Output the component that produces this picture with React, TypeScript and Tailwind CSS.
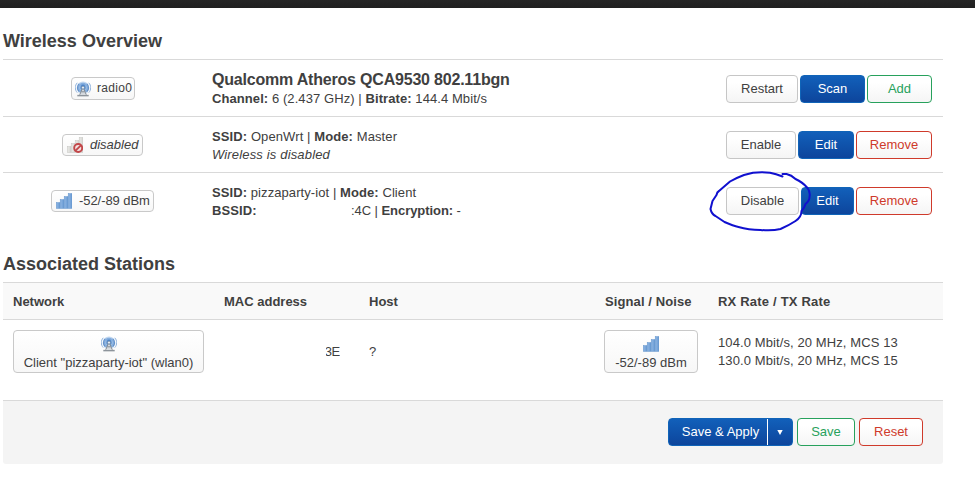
import React from "react";

type Tone = "plain" | "primary" | "positive" | "negative";

const tones: Record<Tone, string> = {
  plain: "border-[#c6c6c6] text-[#404040] bg-linear-to-b from-white from-25% to-[#f5f5f5]",
  primary: "border-[#1064b8] text-white bg-linear-to-b from-[#1260ba] to-[#0d459c]",
  positive: "border-[#27a15c] text-[#27a15c] bg-linear-to-b from-white from-25% to-[#f5f5f5]",
  negative: "border-[#cf3a2b] text-[#cf3a2b] bg-linear-to-b from-white from-25% to-[#f5f5f5]",
};

function Button({ tone = "plain", className, children }: { tone?: Tone; className: string; children: React.ReactNode }) {
  return (
    <button className={`flex h-7 shrink-0 items-center justify-center whitespace-nowrap rounded-[4px] border text-[13px] leading-[18px] ${tones[tone]} ${className}`}>
      {children}
    </button>
  );
}

function RadioIcon() {
  return (
    <svg width="16" height="16" viewBox="0 0 16 16" fill="none" className="shrink-0">
      <circle cx="8" cy="6.800" r="6.400" fill="#c3d8f0" />
      <circle cx="8" cy="6.800" r="5" fill="#85aede" />
      <circle cx="8" cy="6.800" r="3.200" fill="#4f87cb" />
      <path d="M2.200 1.800C-.3 4.500-.3 8.900 2.200 11.600M13.800 1.800c2.500 2.700 2.500 7.100 0 9.800" stroke="#8fb2dc" strokeWidth="1" />
      <path d="M4.200 2.800c-2.100 2.200-2.100 5.800 0 8M11.800 2.800c2.100 2.200 2.100 5.800 0 8" stroke="#447bbe" strokeWidth="1" />
      <path d="M5.800 4.400c-1.200 1.300-1.200 3.500 0 4.800M10.200 4.400c1.200 1.300 1.200 3.500 0 4.800" stroke="#b9d3ef" strokeWidth=".8" />
      <path d="M7 7.500h2l2.500 6h-7z" fill="#d4d9de" />
      <path d="M7.400 7.500 4.700 13.800M8.600 7.500l2.700 6.300M6.400 10.800h3.200" stroke="#717a84" strokeWidth=".8" />
      <circle cx="8" cy="6.600" r="1.500" fill="#e4ecf5" stroke="#5c7692" strokeWidth=".6" />
      <path d="M2.300 14.600h11.400" stroke="#8d949b" strokeWidth="1.500" />
    </svg>
  );
}

function SignalIcon({ off = false }: { off?: boolean }) {
  const bars = [[0, 10, 5.8], [4, 7, 8.8], [8, 4, 11.8], [12, 1, 14.8]];
  return (
    <svg width="16" height="16" viewBox="0 0 16 16" className="shrink-0">
      <defs>
        <linearGradient id="bar-on" x1="0" x2="1"><stop stopColor="#8fb7e5" /><stop offset="1" stopColor="#6a9bd3" /></linearGradient>
        <linearGradient id="bar-off" x1="0" x2="1"><stop stopColor="#ebebe8" /><stop offset="1" stopColor="#d6d6d2" /></linearGradient>
      </defs>
      {bars.map(([x, y, h]) => (
        <rect key={x} x={x + 0.2} y={y - 0.4} width="3.800" height={h} fill={off ? "url(#bar-off)" : "url(#bar-on)"} stroke={off ? "#c3c3bf" : "#6293cb"} strokeWidth=".5" />
      ))}
      {off && (
        <g fill="none" stroke="#c2474a" strokeWidth="1.900">
          <circle cx="11.200" cy="11" r="4" fill="#f3e4e3" />
          <path d="m8.500 13.700 5.400-5.400" />
        </g>
      )}
    </svg>
  );
}

const badge = "flex items-center rounded-[4px] border border-[#c9c9c9] bg-linear-to-b from-white to-[#f7f7f7]";

function Row({ height, children }: { height: string; children: React.ReactNode }) {
  return <div className={`flex w-[940px] border-t border-[#d9d9d9] ${height}`}>{children}</div>;
}

export default function App() {
  return (
    <div className="relative h-[494px] w-[975px] overflow-hidden bg-white font-['Liberation_Sans',Arial,sans-serif] text-[13px] leading-[18px] text-[#404040]">
      <div className="h-2 bg-linear-to-b from-[#262626] to-[#202020]" />
      <main className="pl-[3px]">
        <h3 className="flex h-[51px] items-center pt-[14px] text-[18px] font-bold leading-[36px]">Wireless Overview</h3>

        <Row height="h-[57px]">
          <div className="flex w-[209px] justify-center pt-[17px] pr-[9px]">
            <div className={`${badge} h-[23px] w-[64px] gap-[6px] pl-[3px] text-[12px] tracking-[0.300px]`}><RadioIcon /><span className="pb-px">radio0</span></div>
          </div>
          <div className="w-[514px] pt-[11px]">
            <div className="text-[16px] font-bold tracking-[-0.200px]">Qualcomm Atheros QCA9530 802.11bgn</div>
            <div className="pt-px tracking-[0.080px]"><b>Channel:</b> 6 (2.437 GHz) | <b>Bitrate:</b> 144.4 Mbit/s</div>
          </div>
          <div className="flex gap-[2px] pt-[15px]">
            <Button className="w-[72px]">Restart</Button>
            <Button tone="primary" className="w-[65px]">Scan</Button>
            <Button tone="positive" className="w-[65px]">Add</Button>
          </div>
        </Row>

        <Row height="h-[56px]">
          <div className="flex w-[209px] justify-center pt-[17px] pr-[10px]">
            <div className={`${badge} h-[22px] w-[81px] gap-[7px] pl-[4px]`}><SignalIcon off /><i>disabled</i></div>
          </div>
          <div className="w-[514px] pt-[11px]">
            <div className="tracking-[0.100px]"><b>SSID:</b> OpenWrt | <b>Mode:</b> Master</div>
            <i className="tracking-[0.160px]">Wireless is disabled</i>
          </div>
          <div className="flex gap-[2px] pt-[14px]">
            <Button className="w-[70px]">Enable</Button>
            <Button tone="primary" className="w-[56px]">Edit</Button>
            <Button tone="negative" className="w-[76px]">Remove</Button>
          </div>
        </Row>

        <Row height="h-[72px]">
          <div className="flex w-[209px] justify-center pt-[17px] pr-[10px]">
            <div className={`${badge} h-[22px] w-[103px] gap-[7px] pl-[4px]`}><SignalIcon /><span className="tracking-[-0.060px]">-52/-89 dBm</span></div>
          </div>
          <div className="w-[514px] pt-[11px]">
            <div className="tracking-[0.080px]"><b>SSID:</b> pizzaparty-iot | <b>Mode:</b> Client</div>
            <div className="flex tracking-[-0.060px]"><b className="w-[139px] tracking-[0.100px]">BSSID:</b><span>:4C | <b>Encryption:</b> -</span></div>
          </div>
          <div className="flex gap-[2px] pt-[14px]">
            <Button className="w-[73px]">Disable</Button>
            <Button tone="primary" className="w-[53px]">Edit</Button>
            <Button tone="negative" className="w-[76px]">Remove</Button>
          </div>
        </Row>

        <h3 className="flex h-[38px] items-center pt-[2px] text-[18px] font-bold">Associated Stations</h3>
        <div className="flex h-[37px] w-[940px] items-center border-t border-[#d9d9d9] bg-[#f9f9f9] pt-[2px] pl-[10px] font-bold">
          <div className="w-[211px]">Network</div>
          <div className="w-[145px]">MAC address</div>
          <div className="w-[236px]">Host</div>
          <div className="w-[113px] tracking-[0.100px]">Signal / Noise</div>
          <div className="tracking-[0.200px]">RX Rate / TX Rate</div>
        </div>
        <Row height="h-[81px]">
          <div className="w-[323px] pl-[10px] pt-[10px]">
            <div className={`${badge} h-[43px] w-[191px] flex-col pt-[5px]`}><RadioIcon /><span className="pt-[2px]">Client "pizzaparty-iot" (wlan0)</span></div>
          </div>
          <div className="w-[43px] pt-[23px]">
            <div className="flex w-[14px] justify-end overflow-hidden tracking-[-0.300px]">3E</div>
          </div>
          <div className="w-[235px] pt-[23px]">?</div>
          <div className="w-[114px] pt-[10px]">
            <div className={`${badge} h-[43px] w-[94px] flex-col pt-[5px]`}><SignalIcon /><span className="pt-[2px]">-52/-89 dBm</span></div>
          </div>
          <div className="pt-[14px] tracking-[0.100px]"><div>104.0 Mbit/s, 20 MHz, MCS 13</div><div>130.0 Mbit/s, 20 MHz, MCS 15</div></div>
        </Row>

        <div className="flex h-[64px] w-[940px] justify-end gap-1 rounded-b-[3px] border-t border-[#d9d9d9] bg-[#f4f4f4] pr-5 pt-[17px]">
          <div className="flex h-7 w-[125px] overflow-hidden rounded-[4px] border border-[#1064b8] bg-linear-to-b from-[#1260ba] to-[#0d459c] text-white">
            <button className="w-[99px] whitespace-nowrap border-r border-white pl-[5px]">Save &amp; Apply</button>
            <button className="flex flex-1 items-center justify-center">
              <svg width="6" height="5" viewBox="0 0 6 5" fill="white"><path d="M.3 0h5.400L3 5z" /></svg>
            </button>
          </div>
          <Button tone="positive" className="w-[58px]">Save</Button>
          <Button tone="negative" className="w-[64px]">Reset</Button>
        </div>
      </main>

      <svg className="absolute left-[700px] top-[165px]" width="120" height="75" viewBox="700 165 120 75" fill="none" stroke="#1010cf" strokeWidth="2" strokeLinecap="round" strokeLinejoin="round">
        <path d="M782.500 176.500Q776 174 770 172.700q-8-.8-17 0l-9 2.300q-8 3-14 6.500l-11 9.500q-2 1-2.500 4l-4 6-2 8q1 5 5 7l9 6q9 4 14 5 10 3 22 3 12 1 20-1 9-4 15-8 6-4 6-10 3-3 4-7 4-3 4-7 1-5-2-9-5-6-12-9-4-4-9-5h-4" />
      </svg>
    </div>
  );
}
